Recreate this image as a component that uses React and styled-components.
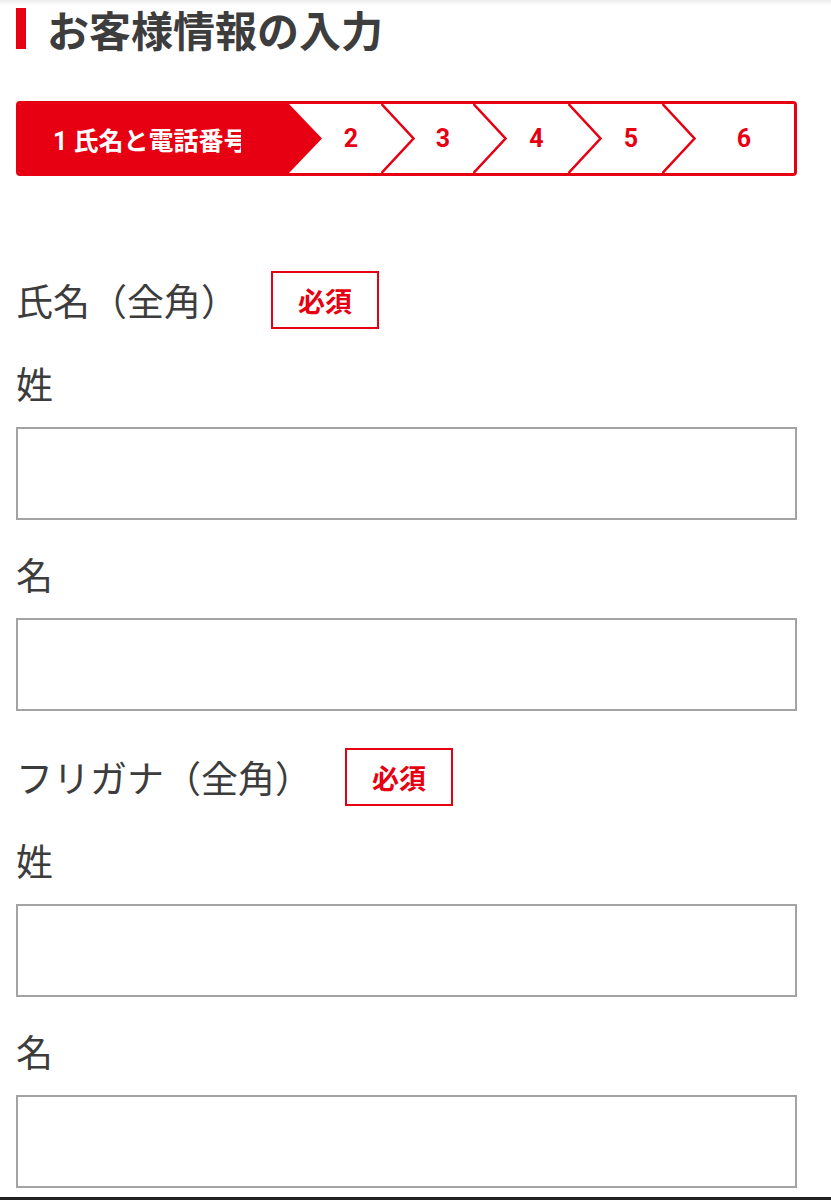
import styled, { createGlobalStyle } from "styled-components";

const RED = "#e60012";

const GlobalStyle = createGlobalStyle`
    body {
        margin: 0;
        background: linear-gradient(#ececec, #ffffff 5px) no-repeat, #ffffff;
        font-family: "Noto Sans CJK JP", "Noto Sans", sans-serif;
        color: #3c3c3c;
    }
`;

const Page = styled.div`
    width: 781px;
    padding: 8px 0 0 16px;
`;

const Heading = styled.h1`
    margin: 0;
    height: 41px;
    line-height: 41px;
    border-left: 10px solid ${RED};
    padding-left: 21px;
    font-size: 42px;
    font-weight: 700;
    color: #3d3d3d;
    white-space: nowrap;
`;

const Stepper = styled.ol`
    display: flex;
    box-sizing: border-box;
    height: 75px;
    margin: 52px 0 0;
    padding: 0;
    list-style: none;
    border: 3px solid ${RED};
    border-radius: 4px;
    overflow: hidden;
    font-family: Roboto, "Noto Sans CJK JP", sans-serif;
    font-size: 25px;
    font-weight: 700;
`;

const Step = styled.li`
    position: relative;
    flex: ${(p) => (p.$w ? `0 0 ${p.$w}px` : "1 1 auto")};
    box-sizing: border-box;
    display: flex;
    align-items: center;
    justify-content: ${(p) => (p.$active ? "flex-start" : "center")};
    padding-left: ${(p) => (p.$active ? 34 : 32)}px;
    background: ${(p) => (p.$active ? RED : "#ffffff")};
    color: ${(p) => (p.$active ? "#ffffff" : RED)};
`;

/* the active step's caption is cut by its box, as on the live page */
const StepText = styled.span`
    display: block;
    max-width: 188px;
    overflow: hidden;
    white-space: nowrap;
`;

const Arrow = styled.svg`
    position: absolute;
    top: 0;
    left: 100%;
    width: 34px;
    height: 100%;
    z-index: 2;
`;

const Section = styled.section`
    margin-top: ${(p) => p.$top}px;
`;

const SectionHead = styled.div`
    display: flex;
    align-items: center;
    height: 58px;
`;

const Title = styled.span`
    font-size: 37px;
    line-height: 50px;
    white-space: nowrap;
`;

const Badge = styled.span`
    box-sizing: border-box;
    display: flex;
    align-items: center;
    justify-content: center;
    width: 108px;
    height: 58px;
    margin-left: 33px;
    border: 2px solid ${RED};
    color: ${RED};
    font-size: 27px;
    font-weight: 700;
`;

const SubLabel = styled.label`
    display: block;
    margin: 29px 0 19px;
    font-size: 37px;
    line-height: 50px;
`;

const TextInput = styled.input`
    display: block;
    box-sizing: border-box;
    width: 100%;
    height: 93px;
    margin: 0;
    border: 2px solid #a3a3a3;
    border-radius: 0;
    background: #ffffff;
    font-size: 30px;
    padding: 0 16px;
`;

const BottomEdge = styled.div`
    position: fixed;
    left: 0;
    right: 0;
    bottom: 0;
    height: 3px;
    background: #222222;
`;

const steps = [
    { label: "1 氏名と電話番号", w: 270, active: true },
    { label: "2", w: 92 },
    { label: "3", w: 92 },
    { label: "4", w: 95 },
    { label: "5", w: 94 },
    { label: "6" },
];

function StepArrow({ filled }) {
    return (
        <Arrow viewBox="0 0 34 69" preserveAspectRatio="none">
            {filled ? (
                <polygon points="0,0 33,34.5 0,69" fill={RED} />
            ) : (
                <polyline points="0.5,0 32.5,34.5 0.5,69" fill="none" stroke={RED} strokeWidth="2.5" />
            )}
        </Arrow>
    );
}

const sections = [
    { title: "氏名（全角）", top: 95, fields: ["姓", "名"] },
    { title: "フリガナ（全角）", top: 37, fields: ["姓", "名"] },
];

export default function App() {
    return (
        <>
            <GlobalStyle />
            <Page>
                <Heading>お客様情報の入力</Heading>
                <Stepper>
                    {steps.map((s, i) => (
                        <Step key={s.label} $w={s.w} $active={s.active}>
                            {s.active ? <StepText>{s.label}</StepText> : s.label}
                            {i < steps.length - 1 && <StepArrow filled={s.active} />}
                        </Step>
                    ))}
                </Stepper>
                {sections.map((sec) => (
                    <Section key={sec.title} $top={sec.top}>
                        <SectionHead>
                            <Title>{sec.title}</Title>
                            <Badge>必須</Badge>
                        </SectionHead>
                        {sec.fields.map((f) => (
                            <div key={f}>
                                <SubLabel>{f}</SubLabel>
                                <TextInput type="text" />
                            </div>
                        ))}
                    </Section>
                ))}
            </Page>
            <BottomEdge />
        </>
    );
}
